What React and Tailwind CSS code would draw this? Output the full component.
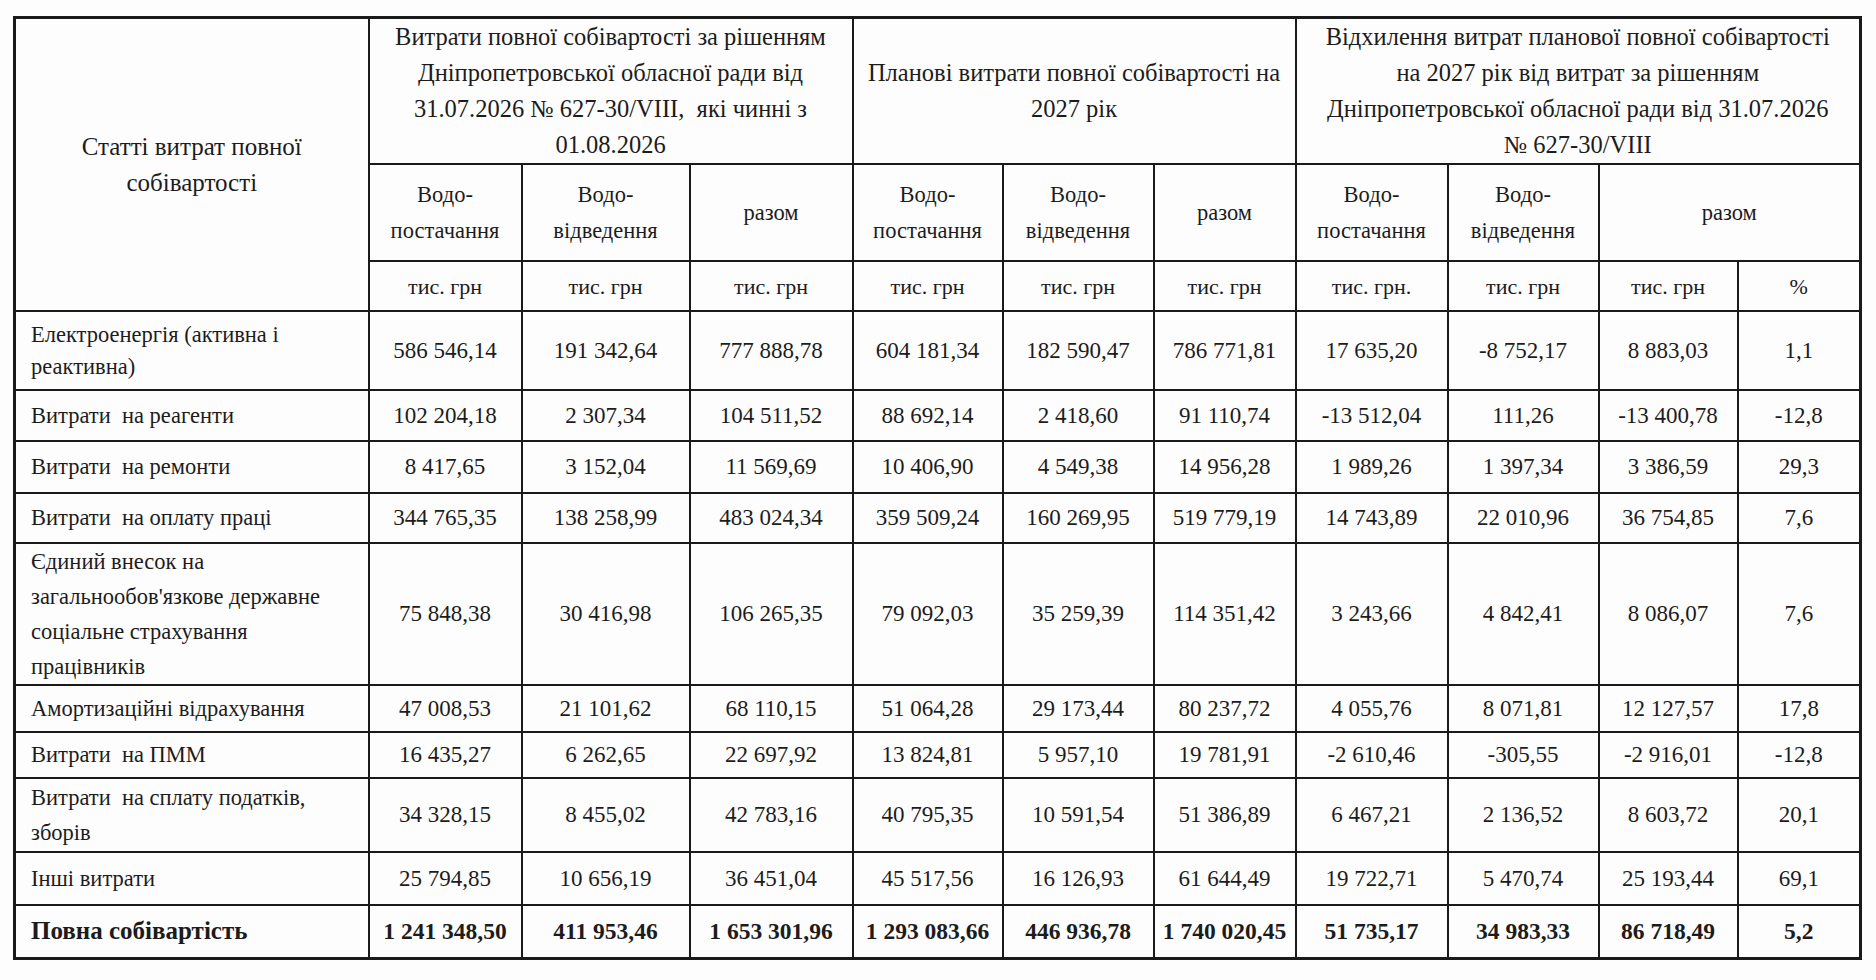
import React from "react";

const rows = [
  { label: ["Електроенергія (активна і", "реактивна)"], h: "h-[79px]", lh: "leading-[32px]", v: ["586 546,14", "191 342,64", "777 888,78", "604 181,34", "182 590,47", "786 771,81", "17 635,20", "-8 752,17", "8 883,03", "1,1"] },
  { label: ["Витрати  на реагенти"], h: "h-[51px]", v: ["102 204,18", "2 307,34", "104 511,52", "88 692,14", "2 418,60", "91 110,74", "-13 512,04", "111,26", "-13 400,78", "-12,8"] },
  { label: ["Витрати  на ремонти"], h: "h-[52px]", v: ["8 417,65", "3 152,04", "11 569,69", "10 406,90", "4 549,38", "14 956,28", "1 989,26", "1 397,34", "3 386,59", "29,3"] },
  { label: ["Витрати  на оплату праці"], h: "h-[50px]", v: ["344 765,35", "138 258,99", "483 024,34", "359 509,24", "160 269,95", "519 779,19", "14 743,89", "22 010,96", "36 754,85", "7,6"] },
  { label: ["Єдиний внесок на", "загальнообов'язкове державне", "соціальне страхування", "працівників"], h: "h-[142px]", lh: "leading-[35px]", v: ["75 848,38", "30 416,98", "106 265,35", "79 092,03", "35 259,39", "114 351,42", "3 243,66", "4 842,41", "8 086,07", "7,6"] },
  { label: ["Амортизаційні відрахування"], h: "h-[47px]", v: ["47 008,53", "21 101,62", "68 110,15", "51 064,28", "29 173,44", "80 237,72", "4 055,76", "8 071,81", "12 127,57", "17,8"] },
  { label: ["Витрати  на ПММ"], h: "h-[46px]", v: ["16 435,27", "6 262,65", "22 697,92", "13 824,81", "5 957,10", "19 781,91", "-2 610,46", "-305,55", "-2 916,01", "-12,8"] },
  { label: ["Витрати  на сплату податків,", "зборів"], h: "h-[74px]", lh: "leading-[35px]", v: ["34 328,15", "8 455,02", "42 783,16", "40 795,35", "10 591,54", "51 386,89", "6 467,21", "2 136,52", "8 603,72", "20,1"] },
  { label: ["Інші витрати"], h: "h-[53px]", v: ["25 794,85", "10 656,19", "36 451,04", "45 517,56", "16 126,93", "61 644,49", "19 722,71", "5 470,74", "25 193,44", "69,1"] },
];

const total = ["1 241 348,50", "411 953,46", "1 653 301,96", "1 293 083,66", "446 936,78", "1 740 020,45", "51 735,17", "34 983,33", "86 718,49", "5,2"];

const cell = "border-[2px] border-[#1a1a1a] align-middle";
const head = `${cell} font-normal`;

function Lines({ lines }) {
  return lines.map((l, i) => (
    <React.Fragment key={i}>
      {i > 0 && <br />}
      {l}
    </React.Fragment>
  ));
}

export default function App() {
  return (
    <div className="min-h-[980px] bg-[#fdfdfd] pl-[13px] pt-[16px] text-[#1c1c1c] font-['Liberation_Serif','Times_New_Roman',serif]">
      <table className="table-fixed border-collapse border-[3px] border-[#1a1a1a] w-[1846px] whitespace-pre">
        <colgroup>
          <col className="w-[354px]" />
          <col className="w-[153px]" />
          <col className="w-[168px]" />
          <col className="w-[163px]" />
          <col className="w-[150px]" />
          <col className="w-[151px]" />
          <col className="w-[142px]" />
          <col className="w-[152px]" />
          <col className="w-[151px]" />
          <col className="w-[139px]" />
          <col className="w-[123px]" />
        </colgroup>
        <thead className="text-center">
          <tr className="h-[146px] text-[24.5px] leading-[36px]">
            <th rowSpan={3} className={`${head} text-[25px]`}>
              <Lines lines={["Статті витрат повної", "собівартості"]} />
            </th>
            <th colSpan={3} className={head}>
              <Lines lines={["Витрати повної собівартості за рішенням", "Дніпропетровської обласної ради від", "31.07.2026 № 627-30/VIII,  які чинні з", "01.08.2026"]} />
            </th>
            <th colSpan={3} className={head}>
              <Lines lines={["Планові витрати повної собівартості на", "2027 рік"]} />
            </th>
            <th colSpan={4} className={head}>
              <Lines lines={["Відхилення витрат планової повної собівартості", "на 2027 рік від витрат за рішенням", "Дніпропетровської обласної ради від 31.07.2026", "№ 627-30/VIII"]} />
            </th>
          </tr>
          <tr className="h-[97px] text-[22.5px] leading-[36px]">
            {[0, 1].map((g) => (
              <React.Fragment key={g}>
                <th className={head}><Lines lines={["Водо-", "постачання"]} /></th>
                <th className={head}><Lines lines={["Водо-", "відведення"]} /></th>
                <th className={head}>разом</th>
              </React.Fragment>
            ))}
            <th className={head}><Lines lines={["Водо-", "постачання"]} /></th>
            <th className={head}><Lines lines={["Водо-", "відведення"]} /></th>
            <th colSpan={2} className={head}>разом</th>
          </tr>
          <tr className="h-[50px] text-[22px]">
            {["тис. грн", "тис. грн", "тис. грн", "тис. грн", "тис. грн", "тис. грн", "тис. грн.", "тис. грн", "тис. грн", "%"].map((u, i) => (
              <th key={i} className={head}>{u}</th>
            ))}
          </tr>
        </thead>
        <tbody className="text-[23px] leading-[34px]">
          {rows.map((r, i) => (
            <tr key={i} className={r.h}>
              <td className={`${cell} pl-[15px] text-left text-[22.5px] ${r.lh || ""}`}>
                <Lines lines={r.label} />
              </td>
              {r.v.map((v, j) => (
                <td key={j} className={`${cell} text-center`}>{v}</td>
              ))}
            </tr>
          ))}
          <tr className="h-[53px] font-bold">
            <td className={`${cell} pl-[15px] text-left text-[25px]`}>Повна собівартість</td>
            {total.map((v, j) => (
              <td key={j} className={`${cell} text-center text-[23.5px]`}>{v}</td>
            ))}
          </tr>
        </tbody>
      </table>
    </div>
  );
}
